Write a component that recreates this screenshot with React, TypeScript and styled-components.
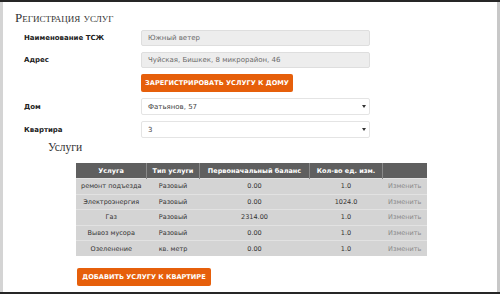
import React from "react";
import styled, { createGlobalStyle } from "styled-components";

const Global = createGlobalStyle`
  html, body { margin: 0; padding: 0; background: #262626; }
  body { width: 500px; height: 294px; overflow: hidden; }
`;

const Frame = styled.div`
  box-sizing: border-box;
  margin-top: 2px;
  width: 500px;
  height: 290px;
  background: #fff;
  border-left: 3px solid #d4d4d4;
  border-right: 3px solid #c8c8c8;
  padding: 8px 0 0 12px;
  font-family: "DejaVu Sans", Verdana, sans-serif;
`;

const Title = styled.h2`
  margin: 0;
  font-family: "Liberation Serif", serif;
  font-weight: normal;
  font-variant: small-caps;
  font-size: 13px;
  line-height: 16px;
  color: #333;
`;

const Form = styled.div`
  display: grid;
  grid-template-columns: 117px 229px;
  align-items: center;
  row-gap: 6px;
  margin: 4px 0 0 9px;
`;

const Label = styled.div`
  font-size: 7px;
  font-weight: bold;
  color: #222;
`;

const Field = styled.div<{ $select?: boolean; $h?: number }>`
  box-sizing: border-box;
  height: ${(p) => p.$h ?? 16}px;
  border: 1px solid ${(p) => (p.$select ? "#e4e4e4" : "#dedede")};
  border-radius: 2px;
  background: ${(p) => (p.$select ? "#fff" : "#ededed")};
  color: ${(p) => (p.$select ? "#444" : "#6a6a6a")};
  font-size: 7px;
  padding: 0 6px;
  display: flex;
  align-items: center;
  justify-content: space-between;
`;

const Arrow = styled.span`
  width: 0;
  height: 0;
  border-left: 2px solid transparent;
  border-right: 2px solid transparent;
  border-top: 3px solid #333;
  margin-right: -3px;
`;

const OrangeButton = styled.button<{ $w: number }>`
  box-sizing: border-box;
  width: ${(p) => p.$w}px;
  height: 18px;
  background: #e65f0b;
  border: none;
  border-radius: 2px;
  color: #fff;
  font-family: "DejaVu Sans", Verdana, sans-serif;
  font-weight: bold;
  font-size: 6.6px;
  text-transform: uppercase;
  padding: 0;
  cursor: pointer;
`;

const Sub = styled.h3`
  margin: 3px 0 0 33px;
  font-family: "Liberation Serif", serif;
  font-weight: normal;
  font-size: 11.5px;
  line-height: 13px;
  color: #333;
`;

const Table = styled.table`
  margin: 9px 0 0 61px;
  border-collapse: collapse;
  font-size: 6.5px;
  color: #333;
  table-layout: fixed;
  width: 347px;
`;

const Th = styled.th<{ $w: number }>`
  width: ${(p) => p.$w}px;
  height: 15px;
  padding: 0;
  background: #5f5f5f;
  color: #fff;
  font-weight: bold;
  border-left: 1px solid #8a8a8a;
  &:first-child { border-left: none; }
`;

const Tr = styled.tr`
  background: #d4d4d4;
  border-top: 1px solid #e2e2e2;
`;

const Td = styled.td<{ $muted?: boolean }>`
  height: 14.6px;
  padding: 0;
  text-align: center;
  white-space: nowrap;
  color: ${(p) => (p.$muted ? "#888" : "#333")};
`;

const BottomBar = styled.div`
  margin: 8px 0 0 62px;
`;

const rows = [
  ["ремонт подъезда", "Разовый", "0.00", "1.0"],
  ["Электроэнергия", "Разовый", "0.00", "1024.0"],
  ["Газ", "Разовый", "2314.00", "1.0"],
  ["Вывоз мусора", "Разовый", "0.00", "1.0"],
  ["Озеленение", "кв. метр", "0.00", "1.0"],
];

export default function App() {
  return (
    <>
      <Global />
      <Frame>
        <Title>Регистрация услуг</Title>
        <Form>
          <Label>Наименование ТСЖ</Label>
          <Field>Южный ветер</Field>
          <Label>Адрес</Label>
          <Field>Чуйская, Бишкек, 8 микрорайон, 46</Field>
          <span />
          <OrangeButton $w={152}>Зарегистрировать услугу к дому</OrangeButton>
          <Label>Дом</Label>
          <Field $select $h={17}>
            Фатьянов, 57
            <Arrow />
          </Field>
          <Label>Квартира</Label>
          <Field $select $h={17}>
            3
            <Arrow />
          </Field>
        </Form>
        <Sub>Услуги</Sub>
        <Table>
          <thead>
            <tr>
              <Th $w={70}>Услуга</Th>
              <Th $w={52}>Тип услуги</Th>
              <Th $w={109}>Первоначальный баланс</Th>
              <Th $w={72}>Кол-во ед. изм.</Th>
              <Th $w={44}></Th>
            </tr>
          </thead>
          <tbody>
            {rows.map((r) => (
              <Tr key={r[0]}>
                <Td>{r[0]}</Td>
                <Td>{r[1]}</Td>
                <Td>{r[2]}</Td>
                <Td>{r[3]}</Td>
                <Td $muted>Изменить</Td>
              </Tr>
            ))}
          </tbody>
        </Table>
        <BottomBar>
          <OrangeButton $w={134}>Добавить услугу к квартире</OrangeButton>
        </BottomBar>
      </Frame>
    </>
  );
}
